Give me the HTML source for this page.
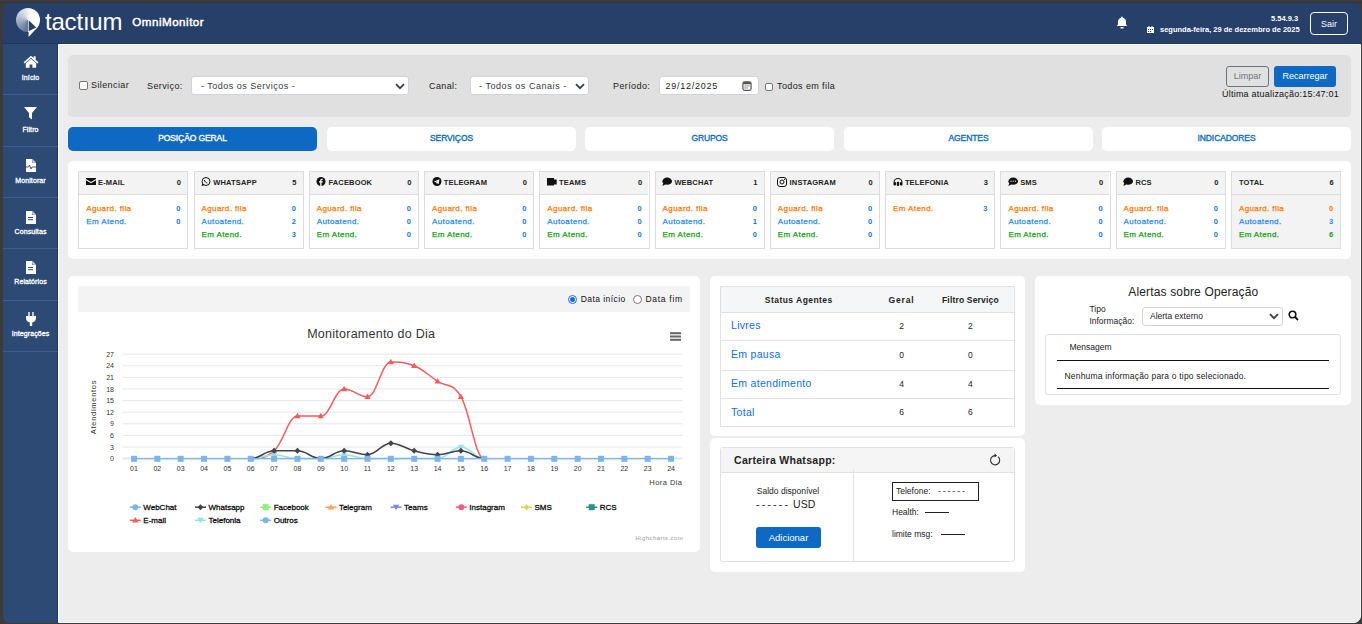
<!DOCTYPE html><html><head><meta charset="utf-8"><style>
*{box-sizing:border-box;margin:0;padding:0}
html,body{width:1362px;height:624px;overflow:hidden;background:#3b3b3b;font-family:"Liberation Sans",sans-serif}
body{position:relative}
div,span,svg{position:absolute;display:block}
.t{white-space:nowrap;line-height:1}
#win{left:3px;top:3px;width:1358px;height:620px}
#hdr{left:0;top:0;width:1358px;height:40px;background:#27406a;border-radius:7px 7px 0 0}
#side{left:0;top:40px;width:55px;height:580px;background:#2d4a74;border-bottom-left-radius:7px}
.sep{left:3px;width:55px;height:1px;background:#3d5f90}
.slab{color:#fff;font-size:7px;width:55px;text-align:center;left:3px;letter-spacing:0.1px;-webkit-text-stroke:0.3px #fff}
.panel{background:#fff;border-radius:5px}
.lbl{font-size:9px;color:#222;letter-spacing:0.4px}
.sel{background:#fff;border:1px solid #cfd4da;border-radius:3px}
.tab{top:127px;height:24px;width:249px;background:#fff;border-radius:5px;color:#0f6cc7;font-size:8.5px;text-align:center;line-height:22.5px;letter-spacing:-0.1px;-webkit-text-stroke:0.35px currentColor}
.card{top:171px;width:110.3px;height:78px;border:1px solid #dcdcdc;background:#fff}
.ch{left:0;top:0;width:108px;height:23px;background:#f3f3f3;border-bottom:1px solid #dcdcdc}
.cn{font-size:7.5px;font-weight:bold;color:#222;top:6.7px;letter-spacing:0.15px}
.cv{font-size:7.5px;font-weight:bold;color:#222;top:6.7px;right:6.5px}
.rl{font-size:8px;left:7px;letter-spacing:0.4px;-webkit-text-stroke:0.25px currentColor}
.rv{font-size:7.5px;right:7px;color:#1479e6;font-weight:bold}
.or{color:#ff7700}.bl{color:#1e8cff}.gr{color:#12a012}
.ax{font-size:7px;color:#333}
</style></head><body>
<div style="left:0;top:2px;width:1362px;height:1px;background:#343434"></div>
<div id="win"><div id="hdr"></div><div id="side"></div><div style="left:54px;top:40px;width:1px;height:580px;background:#1f3966"></div><div style="left:0;top:40px;width:1358px;height:1px;background:#1f3762"></div><div style="left:55px;top:41px;width:1303px;height:579px;border:1px solid #fafafa;border-bottom-right-radius:7px;background:#ededed"></div></div>
<div style="left:16.4px;top:8px;width:24px;height:24px;border-radius:50%;background:conic-gradient(from 180deg,#5c7097 0deg,#8d9bb5 60deg,#c9d0dc 130deg,#f4f5f8 190deg,#fff 230deg,#fff 360deg)"></div>
<svg style="left:0;top:0" width="60" height="42"><polygon points="28.7,20.2 28.7,31.3 36.3,27.6" fill="#27406a"/><polygon points="28.6,31.6 28.6,37 37,27.8" fill="#fff"/></svg>
<div class="t " style="left:45px;top:9.5px;font-size:24px;color:#fff;letter-spacing:-0.2px">tactıum</div>
<div class="t " style="left:132.3px;top:16.3px;font-size:11.6px;color:#fff;letter-spacing:0.5px;-webkit-text-stroke:0.45px #fff">OmniMonitor</div>
<svg style="left:1116px;top:16px" width="12" height="13" viewBox="0 0 12 13"><path d="M6 0.5c.5 0 .8.4.8.8v.5c2 .4 3.2 2 3.2 4v2.6l1.3 1.6H.7L2 8.4V5.8c0-2 1.2-3.6 3.2-4v-.5c0-.4.3-.8.8-.8z" fill="#fff"/><rect x="4.3" y="11" width="3.4" height="1.4" rx=".7" fill="#fff"/></svg>
<div class="t " style="left:1271px;top:14.6px;font-size:7.5px;font-weight:bold;color:#fff">5.54.9.3</div>
<svg style="left:1147px;top:26px" width="7" height="7" viewBox="0 0 7 7"><rect x="0" y="1" width="7" height="6" fill="#fff"/><rect x="1.5" y="0" width="1" height="2" fill="#fff"/><rect x="4.5" y="0" width="1" height="2" fill="#fff"/><rect x="1" y="3" width="1.2" height="1" fill="#27406a"/><rect x="3" y="3" width="1.2" height="1" fill="#27406a"/><rect x="5" y="3" width="1" height="1" fill="#27406a"/><rect x="1" y="5" width="1.2" height="1" fill="#27406a"/><rect x="3" y="5" width="1.2" height="1" fill="#27406a"/></svg>
<div class="t " style="left:1160px;top:25.5px;font-size:7.5px;font-weight:bold;color:#fff">segunda-feira, 29 de dezembro de 2025</div>
<div style="left:1310px;top:12px;width:38px;height:23px;border:1px solid #fff;border-radius:4px;color:#fff;font-size:9px;text-align:center;line-height:22.5px">Sair</div>
<div class="t slab" style="left:3px;top:73.5px;">Início</div>
<div class="sep" style="top:94.0px"></div>
<div class="t slab" style="left:3px;top:125.5px;">Filtro</div>
<div class="sep" style="top:145.5px"></div>
<div class="t slab" style="left:3px;top:176.8px;">Monitorar</div>
<div class="sep" style="top:197.0px"></div>
<div class="t slab" style="left:3px;top:227.5px;">Consultas</div>
<div class="sep" style="top:248.0px"></div>
<div class="t slab" style="left:3px;top:278.3px;">Relatórios</div>
<div class="sep" style="top:300.0px"></div>
<div class="t slab" style="left:3px;top:330px;">Integrações</div>
<div class="sep" style="top:351px"></div>
<svg style="left:23px;top:55px" width="16" height="13" viewBox="0 0 16 13"><path d="M8 0.8L0.6 7.3l1 1.1L8 2.8l6.4 5.6 1-1.1L12.6 4.8V1.2h-1.9v1.9z" fill="#fff"/><path d="M2.8 8.2L8 3.7l5.2 4.5v4.6H9.4V9.6H6.6v3.2H2.8z" fill="#fff"/></svg>
<svg style="left:24px;top:107px" width="13" height="13" viewBox="0 0 13 13"><path d="M0 0h13L8 6v6.5L5 10.3V6z" fill="#fff"/></svg>
<svg style="left:25px;top:158.5px" width="12" height="13" viewBox="0 0 12 13"><path d="M1 0h6.5L11 3.5V13H1z" fill="#fff"/><path d="M7 0v4h4" fill="#2d4a74"/><path d="M7.3 0.3V3.7h3.4z" fill="#cfd8e6"/><path d="M0 8h3.5l1-2 1.5 4 1-2H12" stroke="#2d4a74" stroke-width="0.9" fill="none"/></svg>
<svg style="left:25px;top:210.5px" width="12" height="13" viewBox="0 0 12 13"><path d="M1 0h6.5L11 3.5V13H1z" fill="#fff"/><path d="M7 0v4h4" fill="#2d4a74"/><path d="M7.3 0.3V3.7h3.4z" fill="#cfd8e6"/><rect x="3" y="6" width="5" height="1" fill="#2d4a74"/><rect x="3" y="8.2" width="5" height="1" fill="#2d4a74"/></svg>
<svg style="left:25px;top:261px" width="12" height="13" viewBox="0 0 12 13"><path d="M1 0h6.5L11 3.5V13H1z" fill="#fff"/><path d="M7 0v4h4" fill="#2d4a74"/><path d="M7.3 0.3V3.7h3.4z" fill="#cfd8e6"/><rect x="3" y="6" width="5" height="1" fill="#2d4a74"/><rect x="3" y="8.2" width="5" height="1" fill="#2d4a74"/></svg>
<svg style="left:26px;top:312px" width="10" height="14" viewBox="0 0 10 14"><rect x="2.3" y="0" width="1.4" height="4" fill="#fff"/><rect x="6.3" y="0" width="1.4" height="4" fill="#fff"/><path d="M0 4h10v2c0 2.5-1.6 4.2-3.8 4.6V14H3.8v-3.4C1.6 10.2 0 8.5 0 6z" fill="#fff"/></svg>
<div style="left:68px;top:55px;width:1283px;height:62px;background:#e0e0e0;border-radius:5px"></div>
<div style="left:79px;top:81px;width:9px;height:9px;background:#fff;border:1px solid #767676;border-radius:2px"></div>
<div class="t lbl" style="left:91px;top:80.5px;">Silenciar</div>
<div class="t lbl" style="left:147px;top:81.5px;">Serviço:</div>
<div class="sel" style="left:191px;top:76px;width:218px;height:19px"></div>
<div class="t lbl" style="left:201px;top:81.5px;color:#343a40;letter-spacing:0.5px">- Todos os Serviços -</div>
<svg style="left:395px;top:83px" width="10" height="7" viewBox="0 0 10 7"><path d="M1 1.2l4 4 4-4" stroke="#3a3f45" stroke-width="1.8" fill="none"/></svg>
<div class="t lbl" style="left:429px;top:81.5px;">Canal:</div>
<div class="sel" style="left:470px;top:76px;width:118.5px;height:19px"></div>
<div class="t lbl" style="left:479px;top:81.5px;color:#343a40;letter-spacing:0.55px">- Todos os Canais -</div>
<svg style="left:575px;top:83px" width="10" height="7" viewBox="0 0 10 7"><path d="M1 1.2l4 4 4-4" stroke="#3a3f45" stroke-width="1.8" fill="none"/></svg>
<div class="t lbl" style="left:613px;top:81.5px;">Período:</div>
<div class="sel" style="left:659px;top:76px;width:99.5px;height:19px"></div>
<div class="t lbl" style="left:665.5px;top:81.5px;color:#222;letter-spacing:0.75px">29/12/2025</div>
<svg style="left:741.5px;top:80.5px" width="10" height="10" viewBox="0 0 10 10"><rect x="0.9" y="0.9" width="8.2" height="8.4" rx="1.8" stroke="#555" stroke-width="1.2" fill="none"/><rect x="1" y="1" width="8" height="2.2" rx="1" fill="#555"/><rect x="2.6" y="4.4" width="1.1" height="1.1" fill="#555"/><rect x="4.5" y="4.4" width="1.1" height="1.1" fill="#555"/><rect x="6.4" y="4.4" width="1.1" height="1.1" fill="#555"/><rect x="2.6" y="6.4" width="1.1" height="1.1" fill="#555"/><rect x="4.5" y="6.4" width="1.1" height="1.1" fill="#555"/></svg>
<div style="left:764.5px;top:83px;width:8px;height:8px;background:#fff;border:1px solid #767676;border-radius:2px"></div>
<div class="t lbl" style="left:777px;top:81.5px;">Todos em fila</div>
<div style="left:1226px;top:66px;width:43px;height:21px;border:1px solid #6c757d;border-radius:3px;color:#6c757d;font-size:9px;text-align:center;line-height:19px">Limpar</div>
<div style="left:1274px;top:66px;width:62px;height:21px;background:#0d69c4;border-radius:3px;color:#fff;font-size:9px;text-align:center;line-height:21px">Recarregar</div>
<div class="t lbl" style="left:1222px;top:89.5px;color:#111;letter-spacing:0.22px">Última atualização:15:47:01</div>
<div class="tab" style="left:68px;background:#0d69c4;color:#fff;">POSIÇÃO GERAL</div>
<div class="tab" style="left:327px;">SERVIÇOS</div>
<div class="tab" style="left:585px;">GRUPOS</div>
<div class="tab" style="left:844px;">AGENTES</div>
<div class="tab" style="left:1102px;">INDICADORES</div>
<div class="panel" style="left:68px;top:161px;width:1283px;height:98px"></div>
<div class="card" style="left:78.2px;background:#fff">
<div class="ch"></div>
<svg style="left:6.5px;top:5.3px" width="10" height="10" viewBox="0 0 10 10"><path d="M0 1h10v1L5 5 0 2z M0 3.2l5 3 5-3V8H0z" fill="#111"/></svg>
<div class="t cn" style="left:18.8px">E-MAIL</div>
<div class="t cv">0</div>
<div class="t rl or" style="top:33px">Aguard. fila</div>
<div class="t rv " style="top:33px">0</div>
<div class="t rl bl" style="top:46px">Em Atend.</div>
<div class="t rv " style="top:46px">0</div>
</div>
<div class="card" style="left:193.5px;background:#fff">
<div class="ch"></div>
<svg style="left:6.5px;top:5.3px" width="10" height="10" viewBox="0 0 10 10"><circle cx="5" cy="4.5" r="4" stroke="#111" stroke-width="1" fill="none"/><path d="M1.3 6.5L.5 9l2.6-.8" fill="#111"/><path d="M3.3 3c.3 1.5 1.5 2.7 3 3" stroke="#111" stroke-width="1" fill="none"/></svg>
<div class="t cn" style="left:18.8px">WHATSAPP</div>
<div class="t cv">5</div>
<div class="t rl or" style="top:33px">Aguard. fila</div>
<div class="t rv " style="top:33px">0</div>
<div class="t rl bl" style="top:46px">Autoatend.</div>
<div class="t rv " style="top:46px">2</div>
<div class="t rl gr" style="top:59px">Em Atend.</div>
<div class="t rv " style="top:59px">3</div>
</div>
<div class="card" style="left:308.7px;background:#fff">
<div class="ch"></div>
<svg style="left:6.5px;top:5.3px" width="10" height="10" viewBox="0 0 10 10"><circle cx="5" cy="4.5" r="4.5" fill="#111"/><path d="M5.5 9V5.5h1.2l.2-1.3H5.5v-.8c0-.4.2-.6.6-.6h.8V1.7H6c-1.1 0-1.8.7-1.8 1.8v.7H3v1.3h1.2V9z" fill="#fff"/></svg>
<div class="t cn" style="left:18.8px">FACEBOOK</div>
<div class="t cv">0</div>
<div class="t rl or" style="top:33px">Aguard. fila</div>
<div class="t rv " style="top:33px">0</div>
<div class="t rl bl" style="top:46px">Autoatend.</div>
<div class="t rv " style="top:46px">0</div>
<div class="t rl gr" style="top:59px">Em Atend.</div>
<div class="t rv " style="top:59px">0</div>
</div>
<div class="card" style="left:424.0px;background:#fff">
<div class="ch"></div>
<svg style="left:6.5px;top:5.3px" width="10" height="10" viewBox="0 0 10 10"><circle cx="5" cy="4.5" r="4.5" fill="#111"/><path d="M2 4.5l5.5-2.2-1 5-1.6-1.3-.8.8V5.5l2-1.8-2.6 1.5z" fill="#fff"/></svg>
<div class="t cn" style="left:18.8px">TELEGRAM</div>
<div class="t cv">0</div>
<div class="t rl or" style="top:33px">Aguard. fila</div>
<div class="t rv " style="top:33px">0</div>
<div class="t rl bl" style="top:46px">Autoatend.</div>
<div class="t rv " style="top:46px">0</div>
<div class="t rl gr" style="top:59px">Em Atend.</div>
<div class="t rv " style="top:59px">0</div>
</div>
<div class="card" style="left:539.3px;background:#fff">
<div class="ch"></div>
<svg style="left:6.5px;top:5.3px" width="10" height="10" viewBox="0 0 10 10"><rect x="0" y="1" width="7" height="7.5" fill="#111"/><rect x="6.5" y="2.5" width="3.2" height="5" fill="#111"/></svg>
<div class="t cn" style="left:18.8px">TEAMS</div>
<div class="t cv">0</div>
<div class="t rl or" style="top:33px">Aguard. fila</div>
<div class="t rv " style="top:33px">0</div>
<div class="t rl bl" style="top:46px">Autoatend.</div>
<div class="t rv " style="top:46px">0</div>
<div class="t rl gr" style="top:59px">Em Atend.</div>
<div class="t rv " style="top:59px">0</div>
</div>
<div class="card" style="left:654.6px;background:#fff">
<div class="ch"></div>
<svg style="left:6.5px;top:5.3px" width="10" height="10" viewBox="0 0 10 10"><ellipse cx="5.2" cy="4.2" rx="4.8" ry="3.6" fill="#111"/><path d="M1.2 6l-.8 3 3-1.6z" fill="#111"/></svg>
<div class="t cn" style="left:18.8px">WEBCHAT</div>
<div class="t cv">1</div>
<div class="t rl or" style="top:33px">Aguard. fila</div>
<div class="t rv " style="top:33px">0</div>
<div class="t rl bl" style="top:46px">Autoatend.</div>
<div class="t rv " style="top:46px">1</div>
<div class="t rl gr" style="top:59px">Em Atend.</div>
<div class="t rv " style="top:59px">0</div>
</div>
<div class="card" style="left:769.8px;background:#fff">
<div class="ch"></div>
<svg style="left:6.5px;top:5.3px" width="10" height="10" viewBox="0 0 10 10"><rect x=".5" y=".5" width="9" height="9" rx="2.5" stroke="#111" stroke-width="1" fill="none"/><circle cx="5" cy="5" r="2" stroke="#111" stroke-width="1" fill="none"/><circle cx="7.6" cy="2.4" r=".6" fill="#111"/></svg>
<div class="t cn" style="left:18.8px">INSTAGRAM</div>
<div class="t cv">0</div>
<div class="t rl or" style="top:33px">Aguard. fila</div>
<div class="t rv " style="top:33px">0</div>
<div class="t rl bl" style="top:46px">Autoatend.</div>
<div class="t rv " style="top:46px">0</div>
<div class="t rl gr" style="top:59px">Em Atend.</div>
<div class="t rv " style="top:59px">0</div>
</div>
<div class="card" style="left:885.1px;background:#fff">
<div class="ch"></div>
<svg style="left:6.5px;top:5.3px" width="10" height="10" viewBox="0 0 10 10"><path d="M1 5.5a4 4 0 0 1 8 0" stroke="#111" stroke-width="1.1" fill="none"/><rect x="0.5" y="5" width="2.5" height="3.5" rx="1" fill="#111"/><rect x="7" y="5" width="2.5" height="3.5" rx="1" fill="#111"/><rect x="3.8" y="4.8" width="2.4" height="4.2" rx="1" fill="#111"/></svg>
<div class="t cn" style="left:18.8px">TELEFONIA</div>
<div class="t cv">3</div>
<div class="t rl or" style="top:33px">Em Atend.</div>
<div class="t rv " style="top:33px">3</div>
</div>
<div class="card" style="left:1000.4px;background:#fff">
<div class="ch"></div>
<svg style="left:6.5px;top:5.3px" width="10" height="10" viewBox="0 0 10 10"><ellipse cx="5.2" cy="4.2" rx="4.8" ry="3.6" fill="#111"/><path d="M1.2 6l-.8 3 3-1.6z" fill="#111"/><circle cx="3" cy="4.2" r=".6" fill="#fff"/><circle cx="5.2" cy="4.2" r=".6" fill="#fff"/><circle cx="7.4" cy="4.2" r=".6" fill="#fff"/></svg>
<div class="t cn" style="left:18.8px">SMS</div>
<div class="t cv">0</div>
<div class="t rl or" style="top:33px">Aguard. fila</div>
<div class="t rv " style="top:33px">0</div>
<div class="t rl bl" style="top:46px">Autoatend.</div>
<div class="t rv " style="top:46px">0</div>
<div class="t rl gr" style="top:59px">Em Atend.</div>
<div class="t rv " style="top:59px">0</div>
</div>
<div class="card" style="left:1115.6px;background:#fff">
<div class="ch"></div>
<svg style="left:6.5px;top:5.3px" width="10" height="10" viewBox="0 0 10 10"><ellipse cx="5.2" cy="4.2" rx="4.8" ry="3.6" fill="#111"/><path d="M1.2 6l-.8 3 3-1.6z" fill="#111"/></svg>
<div class="t cn" style="left:18.8px">RCS</div>
<div class="t cv">0</div>
<div class="t rl or" style="top:33px">Aguard. fila</div>
<div class="t rv " style="top:33px">0</div>
<div class="t rl bl" style="top:46px">Autoatend.</div>
<div class="t rv " style="top:46px">0</div>
<div class="t rl gr" style="top:59px">Em Atend.</div>
<div class="t rv " style="top:59px">0</div>
</div>
<div class="card" style="left:1230.9px;background:#f3f3f3">
<div class="ch"></div>
<div class="t cn" style="left:7px">TOTAL</div>
<div class="t cv">6</div>
<div class="t rl or" style="top:33px">Aguard. fila</div>
<div class="t rv or" style="top:33px">0</div>
<div class="t rl bl" style="top:46px">Autoatend.</div>
<div class="t rv bl" style="top:46px">3</div>
<div class="t rl gr" style="top:59px">Em Atend.</div>
<div class="t rv gr" style="top:59px">6</div>
</div>
<div class="panel" style="left:68px;top:276px;width:632px;height:276px"></div>
<div style="left:78px;top:286px;width:612px;height:25.5px;background:#f3f3f3"></div>
<div style="left:567.5px;top:294.5px;width:9px;height:9px;border-radius:50%;border:1px solid #0d6efd;background:#fff"></div>
<div style="left:569.5px;top:296.5px;width:5px;height:5px;border-radius:50%;background:#0d6efd"></div>
<div class="t " style="left:580.7px;top:294.5px;font-size:8.5px;color:#111;letter-spacing:0.45px">Data início</div>
<div style="left:632.5px;top:294.5px;width:9px;height:9px;border-radius:50%;border:1px solid #777;background:#fff"></div>
<div class="t " style="left:645.5px;top:294.5px;font-size:8.5px;color:#111;letter-spacing:0.7px">Data fim</div>
<svg style="left:0;top:0" width="1362" height="624"><path d="M122.6 458.60H682.6" stroke="#e4e6ee" stroke-width="2"/><path d="M122.6 447.00H682.6" stroke="#e6e6e6" stroke-width="1"/><path d="M122.6 435.40H682.6" stroke="#e6e6e6" stroke-width="1"/><path d="M122.6 423.80H682.6" stroke="#e6e6e6" stroke-width="1"/><path d="M122.6 412.20H682.6" stroke="#e6e6e6" stroke-width="1"/><path d="M122.6 400.60H682.6" stroke="#e6e6e6" stroke-width="1"/><path d="M122.6 389.00H682.6" stroke="#e6e6e6" stroke-width="1"/><path d="M122.6 377.40H682.6" stroke="#e6e6e6" stroke-width="1"/><path d="M122.6 365.80H682.6" stroke="#e6e6e6" stroke-width="1"/><path d="M122.6 354.20H682.6" stroke="#e6e6e6" stroke-width="1"/><path d="M 250.75 458.60 C 260.09 458.60 264.76 458.60 274.10 450.87 C 283.44 443.13 288.11 416.07 297.45 416.07 C 306.79 416.07 311.46 416.07 320.80 416.07 C 330.14 416.07 334.81 389.00 344.15 389.00 C 353.49 389.00 358.16 396.73 367.50 396.73 C 376.84 396.73 381.51 361.93 390.85 361.93 C 400.19 361.93 404.86 361.93 414.20 365.80 C 423.54 369.67 428.21 375.08 437.55 381.27 C 446.89 387.45 451.56 381.27 460.90 396.73 C 470.24 412.20 474.91 458.60 484.25 458.60" stroke="#f45b5b" stroke-width="1.5" fill="none"/><path d="M 250.75 458.60 C 260.09 458.60 264.76 454.73 274.10 454.73 C 283.44 454.73 288.11 458.60 297.45 458.60 C 306.79 458.60 311.46 458.60 320.80 458.60 C 330.14 458.60 334.81 454.73 344.15 454.73 C 353.49 454.73 358.16 458.60 367.50 458.60 C 376.84 458.60 381.51 458.60 390.85 458.60 C 400.19 458.60 404.86 458.60 414.20 458.60 C 423.54 458.60 428.21 458.60 437.55 458.60 C 446.89 458.60 451.56 447.00 460.90 447.00 C 470.24 447.00 474.91 458.60 484.25 458.60" stroke="#91e8e1" stroke-width="1.5" fill="none"/><path d="M 250.75 458.60 C 260.09 458.60 264.76 450.87 274.10 450.87 C 283.44 450.87 288.11 450.87 297.45 450.87 C 306.79 450.87 311.46 458.60 320.80 458.60 C 330.14 458.60 334.81 450.87 344.15 450.87 C 353.49 450.87 358.16 454.73 367.50 454.73 C 376.84 454.73 381.51 443.13 390.85 443.13 C 400.19 443.13 404.86 448.55 414.20 450.87 C 423.54 453.19 428.21 454.73 437.55 454.73 C 446.89 454.73 451.56 450.87 460.90 450.87 C 470.24 450.87 474.91 458.60 484.25 458.60" stroke="#434348" stroke-width="1.5" fill="none"/><path d="M274.10 447.67L277.20 453.07L271.00 453.07Z" fill="#f45b5b"/><path d="M297.45 412.87L300.55 418.27L294.35 418.27Z" fill="#f45b5b"/><path d="M320.80 412.87L323.90 418.27L317.70 418.27Z" fill="#f45b5b"/><path d="M344.15 385.80L347.25 391.20L341.05 391.20Z" fill="#f45b5b"/><path d="M367.50 393.53L370.60 398.93L364.40 398.93Z" fill="#f45b5b"/><path d="M390.85 358.73L393.95 364.13L387.75 364.13Z" fill="#f45b5b"/><path d="M414.20 362.60L417.30 368.00L411.10 368.00Z" fill="#f45b5b"/><path d="M437.55 378.07L440.65 383.47L434.45 383.47Z" fill="#f45b5b"/><path d="M460.90 393.53L464.00 398.93L457.80 398.93Z" fill="#f45b5b"/><path d="M271.00 452.53L277.20 452.53L274.10 457.93Z" fill="#91e8e1"/><path d="M341.05 452.53L347.25 452.53L344.15 457.93Z" fill="#91e8e1"/><path d="M457.80 444.80L464.00 444.80L460.90 450.20Z" fill="#91e8e1"/><path d="M274.10 447.87L277.10 450.87L274.10 453.87L271.10 450.87Z" fill="#434348"/><path d="M297.45 447.87L300.45 450.87L297.45 453.87L294.45 450.87Z" fill="#434348"/><path d="M344.15 447.87L347.15 450.87L344.15 453.87L341.15 450.87Z" fill="#434348"/><path d="M367.50 451.73L370.50 454.73L367.50 457.73L364.50 454.73Z" fill="#434348"/><path d="M390.85 440.13L393.85 443.13L390.85 446.13L387.85 443.13Z" fill="#434348"/><path d="M414.20 447.87L417.20 450.87L414.20 453.87L411.20 450.87Z" fill="#434348"/><path d="M437.55 451.73L440.55 454.73L437.55 457.73L434.55 454.73Z" fill="#434348"/><path d="M460.90 447.87L463.90 450.87L460.90 453.87L457.90 450.87Z" fill="#434348"/><path d="M134.0 458.6H671.0500000000001" stroke="#7cb5ec" stroke-width="1.3" fill="none"/><rect x="131.00" y="455.80" width="6" height="6" fill="#7cb5ec"/><rect x="154.35" y="455.80" width="6" height="6" fill="#7cb5ec"/><rect x="177.70" y="455.80" width="6" height="6" fill="#7cb5ec"/><rect x="201.05" y="455.80" width="6" height="6" fill="#7cb5ec"/><rect x="224.40" y="455.80" width="6" height="6" fill="#7cb5ec"/><rect x="247.75" y="455.80" width="6" height="6" fill="#7cb5ec"/><rect x="271.10" y="455.80" width="6" height="6" fill="#7cb5ec"/><rect x="294.45" y="455.80" width="6" height="6" fill="#7cb5ec"/><rect x="317.80" y="455.80" width="6" height="6" fill="#7cb5ec"/><rect x="341.15" y="455.80" width="6" height="6" fill="#7cb5ec"/><rect x="364.50" y="455.80" width="6" height="6" fill="#7cb5ec"/><rect x="387.85" y="455.80" width="6" height="6" fill="#7cb5ec"/><rect x="411.20" y="455.80" width="6" height="6" fill="#7cb5ec"/><rect x="434.55" y="455.80" width="6" height="6" fill="#7cb5ec"/><rect x="457.90" y="455.80" width="6" height="6" fill="#7cb5ec"/><rect x="481.25" y="455.80" width="6" height="6" fill="#7cb5ec"/><rect x="504.60" y="455.80" width="6" height="6" fill="#7cb5ec"/><rect x="527.95" y="455.80" width="6" height="6" fill="#7cb5ec"/><rect x="551.30" y="455.80" width="6" height="6" fill="#7cb5ec"/><rect x="574.65" y="455.80" width="6" height="6" fill="#7cb5ec"/><rect x="598.00" y="455.80" width="6" height="6" fill="#7cb5ec"/><rect x="621.35" y="455.80" width="6" height="6" fill="#7cb5ec"/><rect x="644.70" y="455.80" width="6" height="6" fill="#7cb5ec"/><rect x="668.05" y="455.80" width="6" height="6" fill="#7cb5ec"/><rect x="670" y="332.2" width="11" height="2" fill="#666"/><rect x="670" y="335.5" width="11" height="2" fill="#666"/><rect x="670" y="338.8" width="11" height="2" fill="#666"/><path d="M129.8 507.2h11" stroke="#7cb5ec" stroke-width="1.5"/><circle cx="135.3" cy="507.2" r="3" fill="#7cb5ec"/><path d="M195.0 507.2h11" stroke="#434348" stroke-width="1.5"/><path d="M200.5 504.2l3 3-3 3-3-3z" fill="#434348"/><path d="M260.2 507.2h11" stroke="#90ed7d" stroke-width="1.5"/><rect x="262.70000000000005" y="504.2" width="6" height="6" fill="#90ed7d"/><path d="M325.4 507.2h11" stroke="#f7a35c" stroke-width="1.5"/><path d="M330.90000000000003 504.0l3.2 5.5h-6.4z" fill="#f7a35c"/><path d="M390.6 507.2h11" stroke="#8085e9" stroke-width="1.5"/><path d="M392.90000000000003 504.7h6.4l-3.2 5.5z" fill="#8085e9"/><path d="M455.8 507.2h11" stroke="#f15c80" stroke-width="1.5"/><circle cx="461.3" cy="507.2" r="3" fill="#f15c80"/><path d="M521.0 507.2h11" stroke="#e4d354" stroke-width="1.5"/><path d="M526.5 504.2l3 3-3 3-3-3z" fill="#e4d354"/><path d="M586.2 507.2h11" stroke="#2b908f" stroke-width="1.5"/><rect x="588.7" y="504.2" width="6" height="6" fill="#2b908f"/><path d="M129.8 520.3h11" stroke="#f45b5b" stroke-width="1.5"/><path d="M135.3 517.0999999999999l3.2 5.5h-6.4z" fill="#f45b5b"/><path d="M195.0 520.3h11" stroke="#91e8e1" stroke-width="1.5"/><path d="M197.3 517.8h6.4l-3.2 5.5z" fill="#91e8e1"/><path d="M260.2 520.3h11" stroke="#7cb5ec" stroke-width="1.5"/><circle cx="265.70000000000005" cy="520.3" r="3" fill="#7cb5ec"/></svg>
<div class="t " style="left:371.2px;top:328px;font-size:12.5px;color:#333;letter-spacing:0.25px;transform:translateX(-50%)">Monitoramento do Dia</div>
<div class="t ax" style="left:114px;top:455.1px;transform:translateX(-100%)">0</div>
<div class="t ax" style="left:114px;top:443.5px;transform:translateX(-100%)">3</div>
<div class="t ax" style="left:114px;top:431.90000000000003px;transform:translateX(-100%)">6</div>
<div class="t ax" style="left:114px;top:420.3px;transform:translateX(-100%)">9</div>
<div class="t ax" style="left:114px;top:408.70000000000005px;transform:translateX(-100%)">12</div>
<div class="t ax" style="left:114px;top:397.1px;transform:translateX(-100%)">15</div>
<div class="t ax" style="left:114px;top:385.5px;transform:translateX(-100%)">18</div>
<div class="t ax" style="left:114px;top:373.90000000000003px;transform:translateX(-100%)">21</div>
<div class="t ax" style="left:114px;top:362.3px;transform:translateX(-100%)">24</div>
<div class="t ax" style="left:114px;top:350.70000000000005px;transform:translateX(-100%)">27</div>
<div class="t ax" style="left:134.0px;top:464.5px;transform:translateX(-50%)">01</div>
<div class="t ax" style="left:157.35px;top:464.5px;transform:translateX(-50%)">02</div>
<div class="t ax" style="left:180.7px;top:464.5px;transform:translateX(-50%)">03</div>
<div class="t ax" style="left:204.05px;top:464.5px;transform:translateX(-50%)">04</div>
<div class="t ax" style="left:227.4px;top:464.5px;transform:translateX(-50%)">05</div>
<div class="t ax" style="left:250.75px;top:464.5px;transform:translateX(-50%)">06</div>
<div class="t ax" style="left:274.1px;top:464.5px;transform:translateX(-50%)">07</div>
<div class="t ax" style="left:297.45000000000005px;top:464.5px;transform:translateX(-50%)">08</div>
<div class="t ax" style="left:320.8px;top:464.5px;transform:translateX(-50%)">09</div>
<div class="t ax" style="left:344.15px;top:464.5px;transform:translateX(-50%)">10</div>
<div class="t ax" style="left:367.5px;top:464.5px;transform:translateX(-50%)">11</div>
<div class="t ax" style="left:390.85px;top:464.5px;transform:translateX(-50%)">12</div>
<div class="t ax" style="left:414.20000000000005px;top:464.5px;transform:translateX(-50%)">13</div>
<div class="t ax" style="left:437.55px;top:464.5px;transform:translateX(-50%)">14</div>
<div class="t ax" style="left:460.90000000000003px;top:464.5px;transform:translateX(-50%)">15</div>
<div class="t ax" style="left:484.25px;top:464.5px;transform:translateX(-50%)">16</div>
<div class="t ax" style="left:507.6px;top:464.5px;transform:translateX(-50%)">17</div>
<div class="t ax" style="left:530.95px;top:464.5px;transform:translateX(-50%)">18</div>
<div class="t ax" style="left:554.3px;top:464.5px;transform:translateX(-50%)">19</div>
<div class="t ax" style="left:577.6500000000001px;top:464.5px;transform:translateX(-50%)">20</div>
<div class="t ax" style="left:601.0px;top:464.5px;transform:translateX(-50%)">21</div>
<div class="t ax" style="left:624.35px;top:464.5px;transform:translateX(-50%)">22</div>
<div class="t ax" style="left:647.7px;top:464.5px;transform:translateX(-50%)">23</div>
<div class="t ax" style="left:671.0500000000001px;top:464.5px;transform:translateX(-50%)">24</div>
<div class="t ax" style="left:93.6px;top:406.5px;transform:translate(-50%,-50%) rotate(-90deg);font-size:7.5px;letter-spacing:0.7px">Atendimentos</div>
<div class="t ax" style="left:682.5px;top:478.8px;transform:translateX(-100%);font-size:7.5px;letter-spacing:0.45px">Hora Dia</div>
<div class="t " style="left:683.3px;top:534.6px;transform:translateX(-100%);font-size:6px;color:#999;letter-spacing:0.45px">Highcharts.com</div>
<div class="t " style="left:143.3px;top:503.59999999999997px;font-size:8px;color:#111;-webkit-text-stroke:0.3px #111">WebChat</div>
<div class="t " style="left:208.5px;top:503.59999999999997px;font-size:8px;color:#111;-webkit-text-stroke:0.3px #111">Whatsapp</div>
<div class="t " style="left:273.70000000000005px;top:503.59999999999997px;font-size:8px;color:#111;-webkit-text-stroke:0.3px #111">Facebook</div>
<div class="t " style="left:338.90000000000003px;top:503.59999999999997px;font-size:8px;color:#111;-webkit-text-stroke:0.3px #111">Telegram</div>
<div class="t " style="left:404.1px;top:503.59999999999997px;font-size:8px;color:#111;-webkit-text-stroke:0.3px #111">Teams</div>
<div class="t " style="left:469.3px;top:503.59999999999997px;font-size:8px;color:#111;-webkit-text-stroke:0.3px #111">Instagram</div>
<div class="t " style="left:534.5px;top:503.59999999999997px;font-size:8px;color:#111;-webkit-text-stroke:0.3px #111">SMS</div>
<div class="t " style="left:599.7px;top:503.59999999999997px;font-size:8px;color:#111;-webkit-text-stroke:0.3px #111">RCS</div>
<div class="t " style="left:143.3px;top:516.6999999999999px;font-size:8px;color:#111;-webkit-text-stroke:0.3px #111">E-mail</div>
<div class="t " style="left:208.5px;top:516.6999999999999px;font-size:8px;color:#111;-webkit-text-stroke:0.3px #111">Telefonia</div>
<div class="t " style="left:273.70000000000005px;top:516.6999999999999px;font-size:8px;color:#111;-webkit-text-stroke:0.3px #111">Outros</div>
<div class="panel" style="left:710px;top:276px;width:315px;height:160px"></div>
<div style="left:720px;top:286px;width:295px;height:141px;border:1px solid #dee2e6;background:#fff"></div>
<div style="left:721px;top:287px;width:293px;height:25.5px;background:#f5f6f8;border-bottom:1px solid #dee2e6"></div>
<div style="left:721px;top:340.3px;width:293px;height:1px;background:#dee2e6"></div>
<div style="left:721px;top:369.5px;width:293px;height:1px;background:#dee2e6"></div>
<div style="left:721px;top:398.3px;width:293px;height:1px;background:#dee2e6"></div>
<div class="t " style="left:798.8px;top:296px;font-size:8.5px;font-weight:bold;color:#222;letter-spacing:0.45px;transform:translateX(-50%)">Status Agentes</div>
<div class="t " style="left:901.5px;top:296px;font-size:8.5px;font-weight:bold;color:#222;letter-spacing:0.9px;transform:translateX(-50%)">Geral</div>
<div class="t " style="left:970.4px;top:296px;font-size:8.5px;font-weight:bold;color:#222;letter-spacing:0.18px;transform:translateX(-50%)">Filtro Serviço</div>
<div class="t " style="left:731px;top:320.4px;font-size:10.5px;color:#0d6efd;letter-spacing:0.3px">Livres</div>
<div class="t " style="left:901.6px;top:321.9px;font-size:8.5px;color:#222;transform:translateX(-50%)">2</div>
<div class="t " style="left:970.3px;top:321.9px;font-size:8.5px;color:#222;transform:translateX(-50%)">2</div>
<div class="t " style="left:731px;top:349.0px;font-size:10.5px;color:#0d6efd;letter-spacing:0.3px">Em pausa</div>
<div class="t " style="left:901.6px;top:350.5px;font-size:8.5px;color:#222;transform:translateX(-50%)">0</div>
<div class="t " style="left:970.3px;top:350.5px;font-size:8.5px;color:#222;transform:translateX(-50%)">0</div>
<div class="t " style="left:731px;top:378.1px;font-size:10.5px;color:#0d6efd;letter-spacing:0.3px">Em atendimento</div>
<div class="t " style="left:901.6px;top:379.6px;font-size:8.5px;color:#222;transform:translateX(-50%)">4</div>
<div class="t " style="left:970.3px;top:379.6px;font-size:8.5px;color:#222;transform:translateX(-50%)">4</div>
<div class="t " style="left:731px;top:406.5px;font-size:10.5px;color:#0d6efd;letter-spacing:0.3px">Total</div>
<div class="t " style="left:901.6px;top:408px;font-size:8.5px;color:#222;transform:translateX(-50%)">6</div>
<div class="t " style="left:970.3px;top:408px;font-size:8.5px;color:#222;transform:translateX(-50%)">6</div>
<div class="panel" style="left:710px;top:437.5px;width:315px;height:134.5px"></div>
<div style="left:720px;top:447px;width:295px;height:114.5px;border:1px solid #dee2e6;border-radius:3px;background:#fff"></div>
<div style="left:721px;top:448px;width:293px;height:24.5px;background:#f5f5f5;border-bottom:1px solid #dee2e6"></div>
<div style="left:853px;top:469px;width:1px;height:92px;background:#dee2e6"></div>
<div class="t " style="left:734px;top:455px;font-size:10.5px;font-weight:bold;color:#222;letter-spacing:0.3px">Carteira Whatsapp:</div>
<svg style="left:989px;top:453px" width="12" height="13" viewBox="0 0 12 13"><path d="M6.2 2.6A4.6 4.6 0 1 0 9 3.6" stroke="#333" stroke-width="1.1" fill="none"/><path d="M5.6 0.6L8 2.6 5.6 4.6z" fill="#222"/></svg>
<div class="t " style="left:788px;top:487px;font-size:8.5px;color:#222;transform:translateX(-50%)">Saldo disponível</div>
<div class="t " style="left:756px;top:499px;font-size:10.5px;color:#222"><span style="position:static;display:inline;letter-spacing:2.2px">------</span> USD</div>
<div style="left:756px;top:527px;width:65px;height:21px;background:#0d69c4;border-radius:3px;color:#fff;font-size:9.5px;text-align:center;line-height:21px">Adicionar</div>
<div style="left:892px;top:482px;width:87px;height:19px;border:1px solid #222"></div>
<div class="t " style="left:896px;top:487px;font-size:8.5px;color:#222">Telefone: <span style="position:static;display:inline;letter-spacing:2px;padding-left:5px">------</span></div>
<div class="t " style="left:892px;top:508px;font-size:8.5px;color:#222">Health:</div>
<div style="left:925px;top:511.5px;width:24px;height:1px;background:#222"></div>
<div class="t " style="left:892px;top:530px;font-size:8.5px;color:#222">limite msg:</div>
<div style="left:941px;top:533.5px;width:24px;height:1px;background:#222"></div>
<div class="panel" style="left:1035px;top:276px;width:316px;height:129px"></div>
<div class="t " style="left:1193.3px;top:285.5px;font-size:12px;color:#222;letter-spacing:0.15px;transform:translateX(-50%)">Alertas sobre Operação</div>
<div class="t " style="left:1089.4px;top:305px;font-size:8.5px;color:#222">Tipo</div>
<div class="t " style="left:1089.4px;top:317px;font-size:8.5px;color:#222">Informação:</div>
<div class="sel" style="left:1142px;top:307px;width:140.5px;height:18.5px"></div>
<div class="t " style="left:1150px;top:312px;font-size:8.5px;color:#222">Alerta externo</div>
<svg style="left:1269px;top:313px" width="10" height="7" viewBox="0 0 10 7"><path d="M1 1.2l4 4 4-4" stroke="#3a3f45" stroke-width="1.8" fill="none"/></svg>
<svg style="left:1288px;top:310px" width="11" height="11" viewBox="0 0 11 11"><circle cx="4.5" cy="4.5" r="3.3" stroke="#111" stroke-width="1.6" fill="none"/><path d="M7 7l3 3" stroke="#111" stroke-width="1.8"/></svg>
<div style="left:1045px;top:334px;width:295.5px;height:60.5px;border:1px solid #dee2e6;border-radius:3px"></div>
<div class="t " style="left:1069.5px;top:343px;font-size:8.5px;color:#222">Mensagem</div>
<div style="left:1057px;top:360px;width:272px;height:1px;background:#111"></div>
<div class="t " style="left:1064.5px;top:371.5px;font-size:8.5px;color:#222;letter-spacing:0.18px">Nenhuma informação para o tipo selecionado.</div>
<div style="left:1057px;top:388px;width:272px;height:1px;background:#111"></div>
</body></html>
